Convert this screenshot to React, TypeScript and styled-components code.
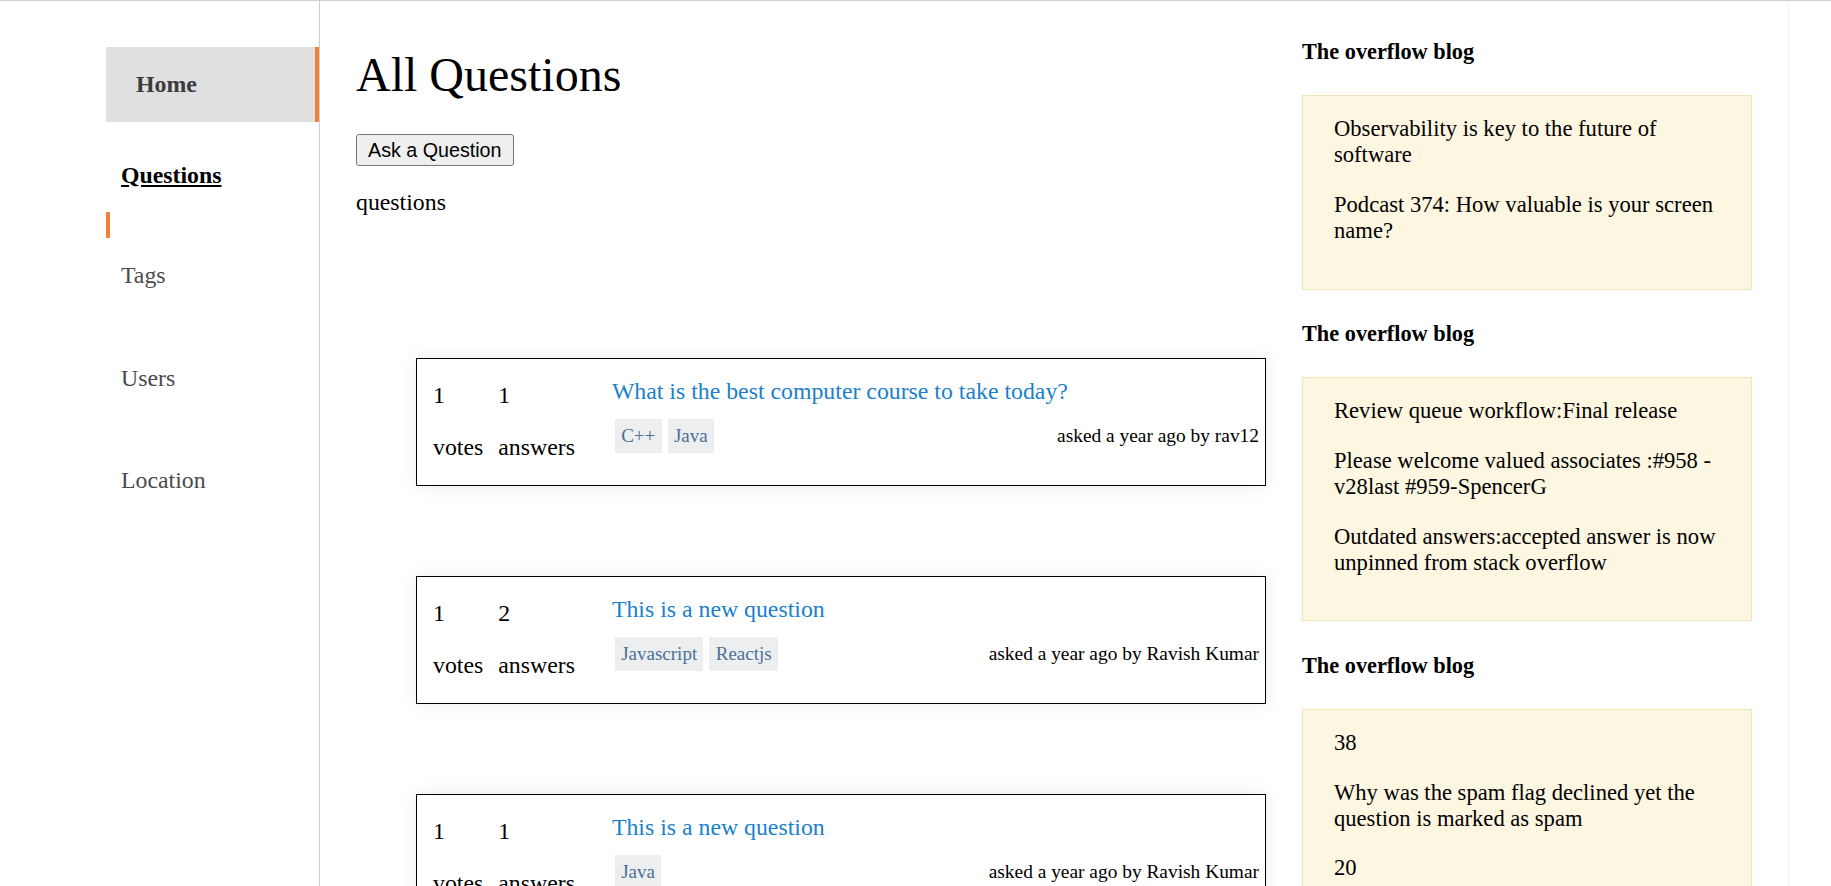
import React from 'react';
import styled, { createGlobalStyle } from 'styled-components';

const GlobalStyle = createGlobalStyle`
  html, body {
    margin: 0;
    padding: 0;
    overflow: hidden;
    background: #fff;
  }
  body {
    font-family: "Liberation Serif", "Times New Roman", serif;
    font-size: 23.8px;
    color: #000;
  }
`;

const Page = styled.div`
  display: flex;
  align-items: stretch;
  min-height: 100vh;
  border-top: 1px solid #cfcfcf;
  box-sizing: border-box;
`;

const Sidebar = styled.nav`
  width: 320px;
  flex-shrink: 0;
  box-sizing: border-box;
  border-right: 1px solid #cfcfcf;
  padding: 45.7px 0 0 106px;
  display: flex;
  flex-direction: column;
  align-items: flex-start;
`;

const HomeItem = styled.div`
  align-self: stretch;
  background: #e0e0e0;
  border-right: 4px solid #f2813a;
  padding: 24px 0 24px 30px;
  line-height: 27px;
  font-weight: bold;
  color: #3c3c3c;
`;

const NavLink = styled.a<{ $top: number; $active?: boolean }>`
  display: block;
  margin-top: ${(p) => p.$top}px;
  padding-left: 15px;
  line-height: 27px;
  color: ${(p) => (p.$active ? '#000' : '#4a4a4a')};
  font-weight: ${(p) => (p.$active ? 'bold' : 'normal')};
  text-decoration: ${(p) => (p.$active ? 'underline' : 'none')};
  cursor: pointer;
`;

const ActiveMark = styled.span`
  display: block;
  width: 4px;
  height: 26px;
  margin-top: 23px;
  background: #f2813a;
`;

const Main = styled.main`
  width: 946px;
  flex-shrink: 0;
  box-sizing: border-box;
  padding-left: 36px;
`;

const Title = styled.h1`
  margin: 47px 0 0;
  font-size: 48px;
  line-height: 54px;
  font-weight: normal;
`;

const AskButton = styled.button`
  display: block;
  margin-top: 32.3px;
  height: 32px;
  box-sizing: border-box;
  padding: 0 11px;
  font-family: "Liberation Sans", Arial, sans-serif;
  font-size: 19.7px;
  color: #000;
  background: #efefef;
  border: 1px solid #767676;
  border-radius: 3px;
`;

const Caption = styled.p`
  margin: 23.2px 0 0;
  line-height: 27px;
`;

const QuestionList = styled.div`
  margin-top: 142px;
  padding-left: 60px;
  display: flex;
  flex-direction: column;
  gap: 90px;
`;

const Card = styled.div`
  display: flex;
  align-items: flex-start;
  height: 128px;
  box-sizing: border-box;
  border: 1px solid #000;
  padding: 0 6px 0 16px;
  box-shadow: 0 0 18px rgba(0, 0, 0, 0.08);
  background: #fff;
`;

const Stats = styled.div`
  display: flex;
  gap: 15px;
  padding-top: 22.5px;
  margin-right: 37px;
`;

const Stat = styled.div`
  display: flex;
  flex-direction: column;
  gap: 25px;
  line-height: 27px;
`;

const Body = styled.div`
  flex: 1;
  padding-top: 18.5px;
`;

const QuestionTitle = styled.a`
  display: block;
  line-height: 27px;
  color: #1b7fcc;
  text-decoration: none;
  cursor: pointer;
`;

const MetaRow = styled.div`
  display: flex;
  align-items: baseline;
  justify-content: space-between;
  margin-top: 14.5px;
`;

const Tags = styled.div`
  display: flex;
  align-items: baseline;
`;

const Tag = styled.span`
  margin: 0 3px;
  padding: 6px 6.3px;
  font-size: 19px;
  line-height: 21.8px;
  background: #eceef0;
  color: #4a7196;
`;

const Asked = styled.span`
  font-size: 19.4px;
  line-height: 22px;
`;

const Aside = styled.aside`
  width: 523px;
  flex-shrink: 0;
  box-sizing: border-box;
  border-right: 1px solid #f8f1d4;
  padding: 37.8px 36px 0;
`;

const BlogHeading = styled.h4`
  margin: 0 0 30.5px;
  font-size: 22.3px;
  line-height: 26px;
  font-weight: bold;
`;

const BlogBox = styled.div`
  margin-bottom: 31.2px;
  background: #fdf6e1;
  border: 1px solid #f0e4b9;
  padding: 20px 27px 21px 31px;
`;

const BlogItem = styled.p`
  margin: 0 0 23.7px;
  font-size: 22.6px;
  line-height: 26px;
`;

const questions = [
  {
    votes: 1,
    answers: 1,
    title: 'What is the best computer course to take today?',
    tags: ['C++', 'Java'],
    author: 'rav12',
  },
  {
    votes: 1,
    answers: 2,
    title: 'This is a new question',
    tags: ['Javascript', 'Reactjs'],
    author: 'Ravish Kumar',
  },
  {
    votes: 1,
    answers: 1,
    title: 'This is a new question',
    tags: ['Java'],
    author: 'Ravish Kumar',
  },
];

const blogs = [
  [
    'Observability is key to the future of software',
    'Podcast 374: How valuable is your screen name?',
  ],
  [
    'Review queue workflow:Final release',
    'Please welcome valued associates :#958 - v28last #959-SpencerG',
    'Outdated answers:accepted answer is now unpinned from stack overflow',
  ],
  [
    '38',
    'Why was the spam flag declined yet the question is marked as spam',
    '20',
    'What is the best way to give feedback on a closed question?',
  ],
];

export default function App() {
  return (
    <>
      <GlobalStyle />
      <Page>
        <Sidebar>
          <HomeItem>Home</HomeItem>
          <NavLink $top={40} $active>
            Questions
          </NavLink>
          <ActiveMark />
          <NavLink $top={24.8}>Tags</NavLink>
          <NavLink $top={75.7}>Users</NavLink>
          <NavLink $top={75.3}>Location</NavLink>
        </Sidebar>

        <Main>
          <Title>All Questions</Title>
          <AskButton>Ask a Question</AskButton>
          <Caption>questions</Caption>
          <QuestionList>
            {questions.map((q, i) => (
              <Card key={i}>
                <Stats>
                  <Stat>
                    <span>{q.votes}</span>
                    <span>votes</span>
                  </Stat>
                  <Stat>
                    <span>{q.answers}</span>
                    <span>answers</span>
                  </Stat>
                </Stats>
                <Body>
                  <QuestionTitle>{q.title}</QuestionTitle>
                  <MetaRow>
                    <Tags>
                      {q.tags.map((t) => (
                        <Tag key={t}>{t}</Tag>
                      ))}
                    </Tags>
                    <Asked>asked a year ago by {q.author}</Asked>
                  </MetaRow>
                </Body>
              </Card>
            ))}
          </QuestionList>
        </Main>

        <Aside>
          {blogs.map((items, i) => (
            <React.Fragment key={i}>
              <BlogHeading>The overflow blog</BlogHeading>
              <BlogBox>
                {items.map((text, j) => (
                  <BlogItem key={j}>{text}</BlogItem>
                ))}
              </BlogBox>
            </React.Fragment>
          ))}
        </Aside>
      </Page>
    </>
  );
}
